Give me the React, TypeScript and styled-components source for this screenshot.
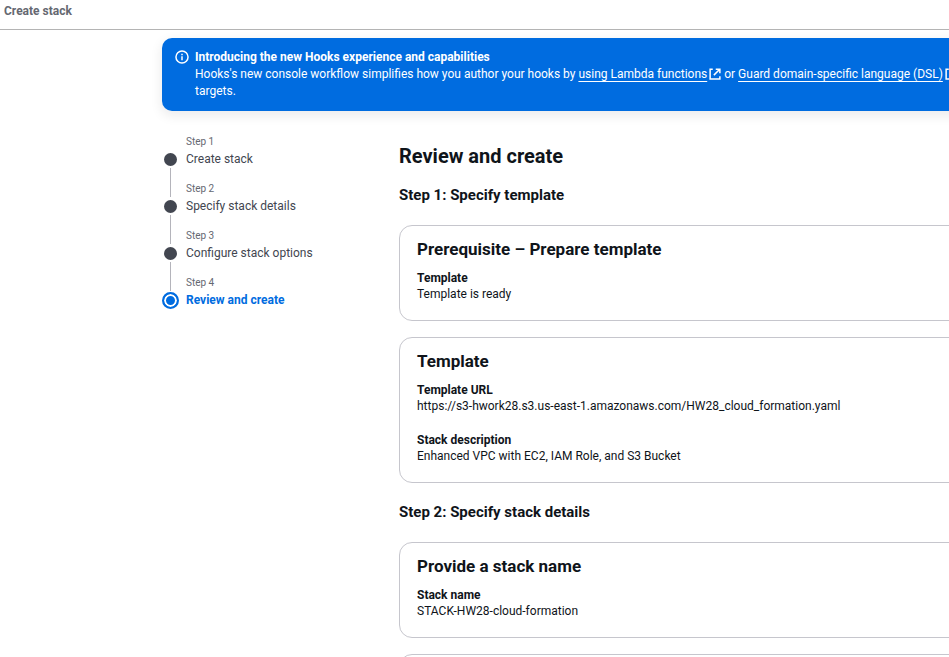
import React from "react";
import styled, { createGlobalStyle, css } from "styled-components";

const GlobalStyle = createGlobalStyle`
  *, *::before, *::after { box-sizing: border-box; }
  body {
    margin: 0;
    background: #fff;
    color: #0f141a;
    font-family: Roboto, "Noto Sans", sans-serif;
    font-size: 12px;
    line-height: 16px;
  }
  h1, h2, h3, p, ol, dl, dd { margin: 0; padding: 0; }
`;

const Page = styled.div`
  height: 100vh;
  overflow: hidden;
`;

const TopBar = styled.header`
  height: 30px;
  padding: 2px 4px;
  border-bottom: 1px solid #b4b4b4;
  color: #656871;
  font-weight: 700;
  line-height: 18px;
`;

const Content = styled.div`
  width: calc(100% + 24px);
  padding: 8px 0 0 162px;
`;

const Banner = styled.section`
  display: flex;
  gap: 6px;
  padding: 11px 13px;
  border-radius: 10px;
  background: #006ce0;
  color: #fff;
  line-height: 17px;
  white-space: nowrap;
  box-shadow: 0 4px 12px 1px rgba(0, 7, 22, 0.08);
`;

const BannerTitle = styled.p`
  font-weight: 700;
`;

const BannerLink = styled.a`
  color: inherit;
  text-decoration: underline;
  text-underline-offset: 3px;
`;

const InfoSvg = styled.svg`
  flex: none;
  width: 14px;
  height: 14px;
  margin-top: 1px;
`;

const ExternalSvg = styled.svg`
  width: 12px;
  height: 12px;
  margin-left: 2px;
  vertical-align: -2px;
`;

const Wizard = styled.div`
  display: grid;
  grid-template-columns: 237px minmax(0, 1fr);
  padding-top: 23px;
`;

const Steps = styled.ol`
  list-style: none;
`;

const Step = styled.li`
  display: grid;
  grid-template-columns: 17px 1fr;
  grid-template-rows: 16px 18px 13px;
  column-gap: 7px;
`;

const StepNumber = styled.span`
  grid-column: 2;
  color: #656871;
  font-size: 10px;
`;

const StepTitle = styled.span<{ $current?: boolean }>`
  grid-column: 2;
  line-height: 18px;
  color: ${(p) => (p.$current ? "#006ce0" : "#424650")};
  font-weight: ${(p) => (p.$current ? 700 : 400)};
`;

const Marker = styled.span<{ $current?: boolean }>`
  grid-column: 1;
  grid-row: 2;
  place-self: center;
  width: 13px;
  height: 13px;
  border-radius: 50%;
  background: #424650;
  ${(p) =>
    p.$current &&
    css`
      width: 17px;
      height: 17px;
      border: 2px solid #006ce0;
      background: #006ce0;
      box-shadow: inset 0 0 0 2px #fff;
    `}
`;

const Connector = styled.span<{ $lead?: boolean }>`
  grid-column: 1;
  grid-row: ${(p) => (p.$lead ? 1 : 3)};
  justify-self: center;
  width: 1px;
  background: #b4b4bb;
`;

const Review = styled.main`
  padding-top: 8px;
`;

const PageTitle = styled.h1`
  margin-bottom: 12px;
  font-size: 20px;
  line-height: 28px;
  font-weight: 700;
`;

const SectionTitle = styled.h2`
  padding: 3px 0 20px;
  font-size: 15px;
  line-height: 20px;
  font-weight: 700;
`;

const Card = styled.section`
  min-height: 96px;
  margin-bottom: 16px;
  padding: 13px 17px 18px;
  border: 1px solid #c6c6cd;
  border-radius: 13px;
`;

const CardTitle = styled.h3`
  margin-bottom: 11px;
  font-size: 17px;
  line-height: 20px;
  font-weight: 700;
`;

const Fields = styled.dl`
  display: grid;
  gap: 18px;
`;

const Label = styled.dt`
  font-weight: 700;
`;

const Value = styled.dd`
  font-size: 12px;
`;

const InfoIcon = () => (
  <InfoSvg viewBox="0 0 16 16" fill="none" stroke="currentColor" strokeWidth="1.7" aria-hidden="true">
    <circle cx="8" cy="8" r="6.9" />
    <path d="M8 11.6V7.2M8 6V4.3" />
  </InfoSvg>
);

const ExternalIcon = () => (
  <ExternalSvg viewBox="0 0 16 16" fill="none" stroke="currentColor" strokeWidth="2" aria-label="Opens in a new tab" role="img">
    <path d="M5 1.5H1.5v13h13V11M9 1.5h5.5V7M14 2L6.5 9.5" />
  </ExternalSvg>
);

const steps = ["Create stack", "Specify stack details", "Configure stack options", "Review and create"];

type Field = { label: string; value: string };

const ReviewCard = ({ title, fields }: { title: string; fields: Field[] }) => (
  <Card>
    <CardTitle>{title}</CardTitle>
    <Fields>
      {fields.map((f) => (
        <div key={f.label}>
          <Label>{f.label}</Label>
          <Value>{f.value}</Value>
        </div>
      ))}
    </Fields>
  </Card>
);

export default function App() {
  return (
    <Page>
      <GlobalStyle />
      <TopBar>Create stack</TopBar>
      <Content>
        <Banner>
          <InfoIcon />
          <div>
            <BannerTitle>Introducing the new Hooks experience and capabilities</BannerTitle>
            <p>
              Hooks's new console workflow simplifies how you author your hooks by{" "}
              <BannerLink href="#lambda">using Lambda functions<ExternalIcon /></BannerLink> or{" "}
              <BannerLink href="#guard">Guard domain-specific language (DSL)<ExternalIcon /></BannerLink>
              <br />
              targets.
            </p>
          </div>
        </Banner>
        <Wizard>
          <nav aria-label="Steps">
            <Steps>
              {steps.map((title, i) => {
                const current = i === steps.length - 1;
                return (
                  <Step key={title} aria-current={current ? "step" : undefined}>
                    {i > 0 && <Connector $lead />}
                    <StepNumber>Step {i + 1}</StepNumber>
                    <Marker $current={current} />
                    <StepTitle $current={current}>{title}</StepTitle>
                    {!current && <Connector />}
                  </Step>
                );
              })}
            </Steps>
          </nav>
          <Review>
            <PageTitle>Review and create</PageTitle>
            <SectionTitle>Step 1: Specify template</SectionTitle>
            <ReviewCard
              title="Prerequisite – Prepare template"
              fields={[{ label: "Template", value: "Template is ready" }]}
            />
            <ReviewCard
              title="Template"
              fields={[
                { label: "Template URL", value: "https://s3-hwork28.s3.us-east-1.amazonaws.com/HW28_cloud_formation.yaml" },
                { label: "Stack description", value: "Enhanced VPC with EC2, IAM Role, and S3 Bucket" },
              ]}
            />
            <SectionTitle>Step 2: Specify stack details</SectionTitle>
            <ReviewCard
              title="Provide a stack name"
              fields={[{ label: "Stack name", value: "STACK-HW28-cloud-formation" }]}
            />
            <Card />
          </Review>
        </Wizard>
      </Content>
    </Page>
  );
}
